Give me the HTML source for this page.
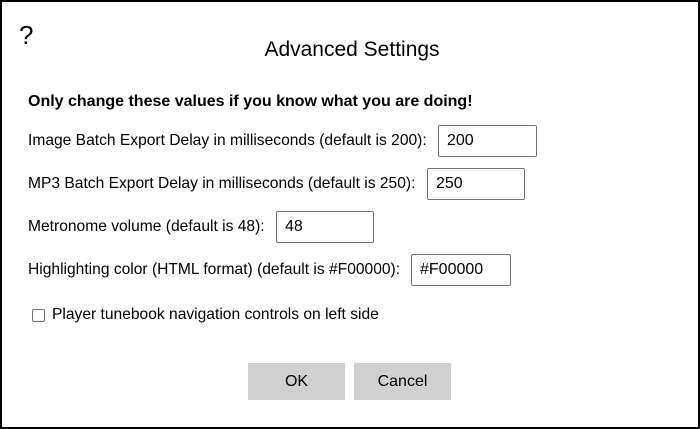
<!DOCTYPE html>
<html><head><style>
body{margin:0;width:700px;height:429px;overflow:hidden;font-family:"Liberation Sans",Arial,sans-serif;color:#000;background:#fff}
.frame{position:absolute;left:0;top:0;width:696px;height:425px;border:2px solid #000}
.a{position:absolute;white-space:nowrap}
.lbl{font-size:15.6px;line-height:18px}
.in{position:absolute;border:1px solid #767676;border-radius:2px;box-sizing:border-box;height:32px;font-size:16px;line-height:30px;padding-left:8px;background:#fff}
.btn{position:absolute;top:363px;width:97px;height:37px;background:#d0d0d0;font-size:16px;line-height:37px;text-align:center}
</style></head><body>
<div class="frame"></div>
<div class="a" style="left:19px;top:20px;font-size:26px;line-height:30px">?</div>
<div class="a" style="left:0;width:704px;top:38px;text-align:center;font-size:21px;line-height:24px">Advanced Settings</div>
<div class="a lbl" style="left:28px;top:93px;font-weight:bold;font-size:16px">Only change these values if you know what you are doing!</div>
<div class="a lbl" style="left:28px;top:132px">Image Batch Export Delay in milliseconds (default is 200):</div>
<div class="in" style="left:438px;top:125px;width:99px">200</div>
<div class="a lbl" style="left:28px;top:175px">MP3 Batch Export Delay in milliseconds (default is 250):</div>
<div class="in" style="left:427px;top:168px;width:98px">250</div>
<div class="a lbl" style="left:28px;top:218px">Metronome volume (default is 48):</div>
<div class="in" style="left:276px;top:211px;width:98px">48</div>
<div class="a lbl" style="left:28px;top:261px">Highlighting color (HTML format) (default is #F00000):</div>
<div class="in" style="left:411px;top:254px;width:100px">#F00000</div>
<div class="a" style="left:32px;top:309px;width:11px;height:11px;border:1px solid #767676;border-radius:2px"></div>
<div class="a lbl" style="left:52px;top:306px">Player tunebook navigation controls on left side</div>
<div class="btn" style="left:248px">OK</div>
<div class="btn" style="left:354px">Cancel</div>
</body></html>
